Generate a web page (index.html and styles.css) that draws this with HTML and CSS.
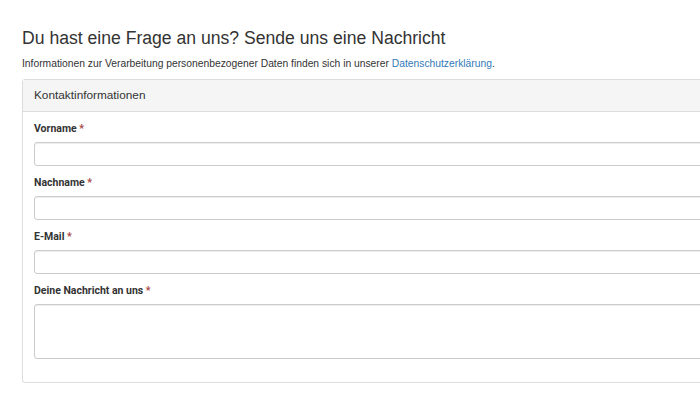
FILE: index.html
```html
<!DOCTYPE html>
<html lang="de">
<head>
<meta charset="utf-8">
<link rel="stylesheet" href="styles.css">
</head>
<body>
<main class="page">
  <h1 class="title">Du hast eine Frage an uns? Sende uns eine Nachricht</h1>
  <p class="info">Informationen zur Verarbeitung personenbezogener Daten finden sich in unserer <a href="#" class="link">Datenschutzerklärung</a>.</p>
  <section class="panel">
    <div class="panel-heading">Kontaktinformationen</div>
    <div class="panel-body">
      <div class="field">
        <label class="label">Vorname <span class="req">*</span></label>
        <div class="input"></div>
      </div>
      <div class="field">
        <label class="label">Nachname <span class="req">*</span></label>
        <div class="input"></div>
      </div>
      <div class="field">
        <label class="label">E-Mail <span class="req">*</span></label>
        <div class="input"></div>
      </div>
      <div class="field">
        <label class="label">Deine Nachricht an uns <span class="req">*</span></label>
        <div class="input textarea"></div>
      </div>
    </div>
  </section>
</main>
</body>
</html>
```
FILE: styles.css
```css
html, body {
  margin: 0;
  padding: 0;
  background: #fff;
  overflow: hidden;
}
body {
  font-family: "Liberation Sans", Arial, sans-serif;
  color: #333;
}
.page {
  padding: 27px 0 0 22px;
  width: 720px;
}
.title {
  margin: 0;
  font-size: 17.6px;
  font-weight: normal;
  line-height: 22px;
  color: #333;
}
.info {
  margin: 9px 0 0 0;
  font-size: 10.3px;
  line-height: 12px;
  color: #333;
}
.link {
  color: #337ab7;
  text-decoration: none;
}
.panel {
  margin-top: 9px;
  border: 1px solid #ddd;
  border-radius: 3px;
  background: #fff;
  box-shadow: 0 1px 1px rgba(0,0,0,0.05);
}
.panel-heading {
  height: 32px;
  box-sizing: border-box;
  background: #f5f5f5;
  border-bottom: 1px solid #ddd;
  padding: 8px 11px;
  font-size: 11.8px;
  line-height: 15px;
  color: #333;
}
.panel-body {
  padding: 10px 11px 23px 11px;
  display: flex;
  flex-direction: column;
  gap: 10px;
}
.field {
  display: flex;
  flex-direction: column;
  gap: 6px;
}
.label {
  font-family: Roboto, "Liberation Sans", sans-serif;
  font-weight: bold;
  font-size: 10.5px;
  line-height: 14px;
  color: #333;
}
.req {
  color: #a94442;
}
.input {
  height: 24px;
  box-sizing: border-box;
  border: 1px solid #ccc;
  border-radius: 3px;
  background: #fff;
  box-shadow: inset 0 1px 1px rgba(0,0,0,0.075);
}
.textarea {
  height: 55px;
}
```
